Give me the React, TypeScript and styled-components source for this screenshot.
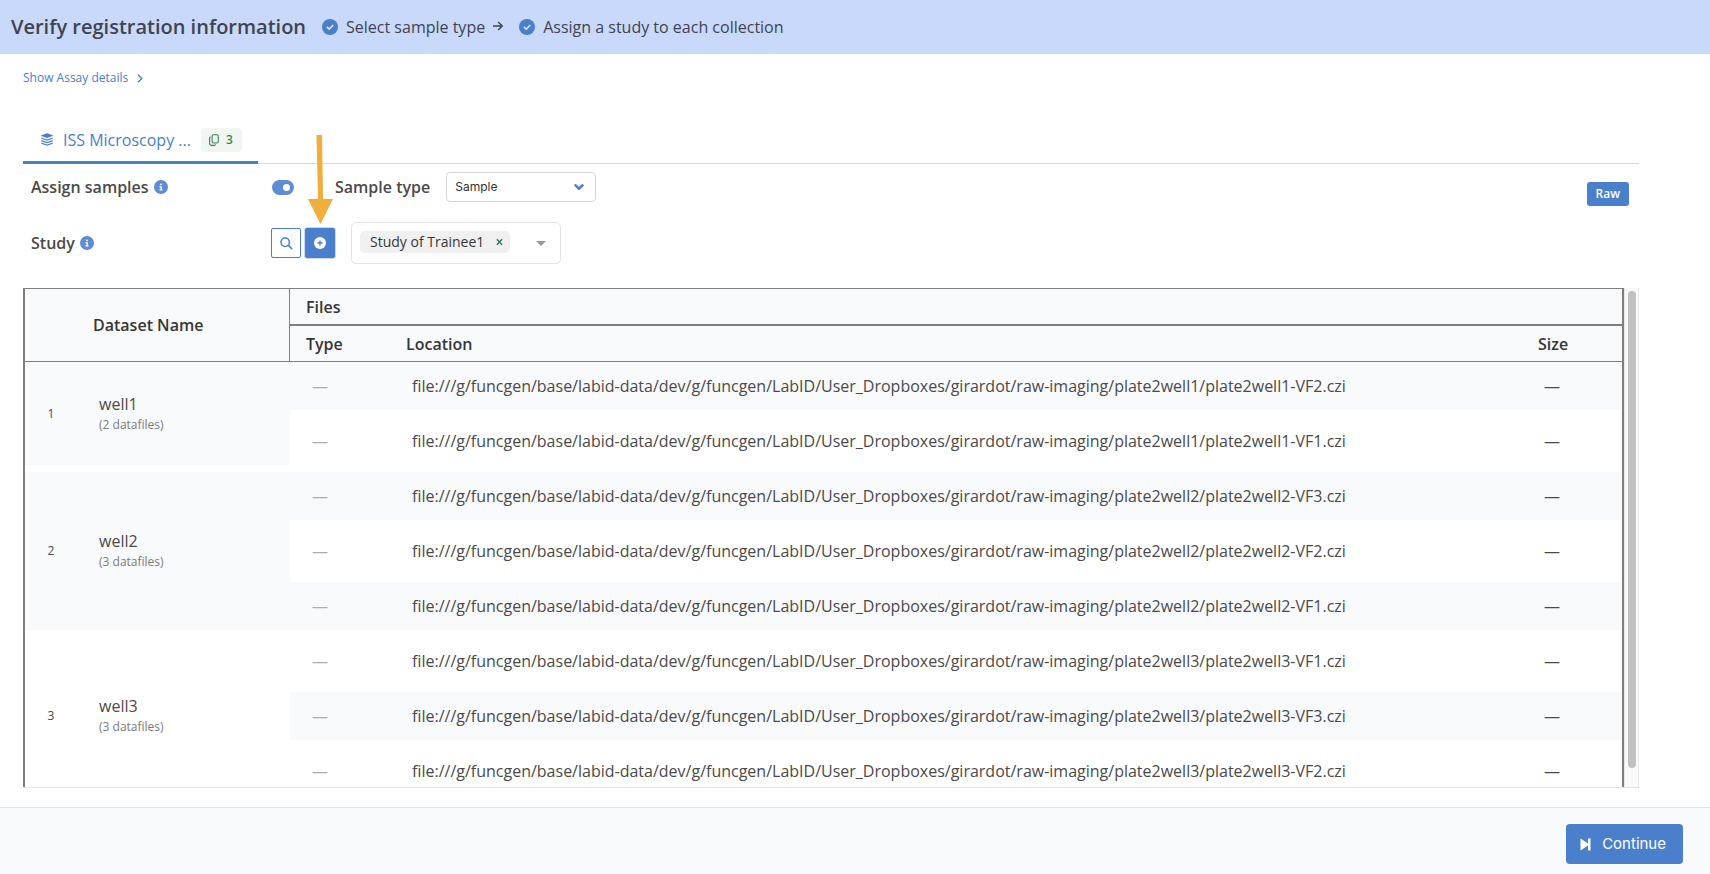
import React, { useState } from "react";
import styled, { createGlobalStyle } from "styled-components";
import { FaCircleInfo } from "react-icons/fa6";

const blue = "#4a7fcb";
const softBlue = "#5f8dd3";
const stripe = "#f9fafc";
const rule = "#7f7f7f";

const GlobalStyle = createGlobalStyle`
  *, *::before, *::after { box-sizing: border-box; }
  body {
    margin: 0;
    background: #fff;
    color: #4a4a4a;
    font-family: "Open Sans", "Liberation Sans", sans-serif;
    font-size: 16px;
    line-height: 24px;
  }
  button, select, input { font: inherit; }
`;

const Page = styled.div`
  display: flex;
  flex-direction: column;
  height: 100vh;
`;

const Header = styled.header`
  display: flex;
  align-items: center;
  height: 54px;
  padding: 0 11px;
  background: #c9d9fb;
  color: #3f4450;
`;

const Title = styled.h1`
  margin: 0 16px 0 0;
  font-size: 20px;
  line-height: 28px;
  font-weight: 600;
`;

const Step = styled.span`
  display: flex;
  align-items: center;
  gap: 8px;
`;

const StepArrow = styled.svg`
  margin-right: 16px;
`;

const Main = styled.main`
  display: flex;
  flex-direction: column;
  flex: 1;
  min-height: 0;
  padding: 12px 71px 19px 23px;
`;

const DetailsLink = styled.a`
  display: flex;
  align-items: center;
  align-self: flex-start;
  gap: 9px;
  color: ${blue};
  font-size: 12px;
  text-decoration: none;
`;

const Tabs = styled.div`
  display: flex;
  margin-top: 26px;
  border-bottom: 1px solid #d9d9d9;
`;

const Tab = styled.button`
  display: flex;
  align-items: center;
  height: 48px;
  margin-bottom: -1px;
  padding: 2px 16px 0 18px;
  border: 0;
  border-bottom: 3px solid ${blue};
  background: none;
  color: ${blue};
  gap: 10px;
`;

const CountBadge = styled.span`
  display: flex;
  align-items: center;
  gap: 7px;
  height: 24px;
  padding: 0 9px 0 8px;
  border-radius: 4px;
  background: #f0f7f3;
  color: #3d8353;
  font-size: 12px;
  font-weight: 600;
`;

const Settings = styled.div`
  display: grid;
  grid-template-columns: 240px auto 1fr;
  align-items: center;
  padding: 4px 10px 24px 8px;
  row-gap: 16px;
`;

const Label = styled.label`
  display: flex;
  align-items: center;
  gap: 5px;
  font-weight: 600;
  svg { color: ${softBlue}; }
`;

const Controls = styled.div`
  display: flex;
  align-items: center;
`;

const Switch = styled.input`
  appearance: none;
  display: flex;
  align-items: center;
  justify-content: flex-end;
  width: 22px;
  height: 15px;
  margin: 0 41px 0 1px;
  padding: 0 4px;
  border-radius: 8px;
  background: ${softBlue};
  &::before {
    content: "";
    width: 7px;
    height: 7px;
    border-radius: 50%;
    background: #fff;
  }
  &:not(:checked) { justify-content: flex-start; background: #b5b5b5; }
`;

const SelectBox = styled.div`
  position: relative;
  margin-left: 16px;
  svg { position: absolute; right: 12px; top: 11px; pointer-events: none; }
`;

const Select = styled.select`
  appearance: none;
  display: block;
  width: 150px;
  height: 30px;
  padding: 0 8px;
  border: 1px solid #d6d6d6;
  border-radius: 4px;
  background: #fff;
  color: #333;
  font-family: Inter, sans-serif;
  font-size: 12px;
`;

const RawButton = styled.button`
  justify-self: end;
  height: 24px;
  margin-top: 14px;
  padding: 0 9px;
  border: 0;
  border-radius: 3px;
  background: ${blue};
  color: #fff;
  font-size: 12px;
  font-weight: 600;
`;

const IconButton = styled.button<{ $filled?: boolean }>`
  position: relative;
  display: flex;
  align-items: center;
  justify-content: center;
  width: 30px;
  height: 30px;
  padding: 0;
  border: 1px solid ${blue};
  border-radius: 2px;
  background: ${(p) => (p.$filled ? blue : "#fff")};
  color: ${(p) => (p.$filled ? "#fff" : blue)};
  box-shadow: ${(p) => (p.$filled ? "0 0 0 1px #cbdaf1" : "none")};
`;

const Pointer = styled.svg`
  position: absolute;
  left: 1px;
  bottom: 33px;
  pointer-events: none;
`;

const MultiSelect = styled.div`
  display: flex;
  align-items: center;
  justify-content: space-between;
  width: 210px;
  height: 42px;
  padding: 0 14px 2px 8px;
  border: 1px solid #e4e4e4;
  border-radius: 5px;
`;

const Chip = styled.span`
  display: flex;
  align-items: center;
  gap: 12px;
  height: 22px;
  padding: 0 7px 0 10px;
  border-radius: 5px;
  background: #f0f0f0;
  color: #35383b;
  font-size: 14px;
`;

const BareButton = styled.button`
  display: flex;
  padding: 0;
  border: 0;
  background: none;
`;

const StudyControls = styled(Controls)`
  grid-column: 2 / -1;
  gap: 4px;
  ${MultiSelect} { margin-left: 12px; }
`;

const ScrollFrame = styled.div`
  display: flex;
  flex: 1;
  min-height: 0;
  border-bottom: 1px solid #e4e4e8;
`;

const TableView = styled.div`
  flex: 1;
  overflow: hidden;
`;

const ScrollTrack = styled.div`
  width: 15px;
  padding: 3px 2px 19px 3px;
  border: solid #e8e8e8;
  border-width: 0 1px;
  background: #fafafa;
`;

const ScrollThumb = styled.div`
  width: 8px;
  height: 100%;
  border-radius: 4px;
  background: #c1c1c1;
`;

const Table = styled.table`
  width: 100%;
  table-layout: fixed;
  border: solid ${rule};
  border-width: 1px 2px 0;
  border-spacing: 0;
`;

const Col = styled.col<{ $width?: number }>`
  width: ${(p) => (p.$width ? p.$width + "px" : "auto")};
`;

const Th = styled.th<{ $line?: number; $side?: boolean }>`
  height: ${(p) => 35 + (p.$line ?? 1)}px;
  padding: 0 16px;
  border-bottom: ${(p) => p.$line ?? 1}px solid ${rule};
  border-right: ${(p) => (p.$side ? 1 : 0)}px solid ${rule};
  background: ${stripe};
  color: #363636;
  font-weight: 600;
  text-align: left;
`;

const Td = styled.td<{ $shaded: boolean; $muted?: boolean }>`
  height: 55px;
  padding: 0 22px;
  border-bottom: 7px solid transparent;
  background: ${(p) => (p.$shaded ? stripe : "#fff")};
  background-clip: padding-box;
  color: ${(p) => (p.$muted ? "#adadad" : "#4a4a4a")};
  white-space: nowrap;
`;

const IndexTd = styled(Td)`
  padding: 0;
  font-size: 12px;
  text-align: center;
`;

const SubText = styled.div`
  padding-bottom: 2px;
  color: #7a7a7a;
  font-size: 12px;
  line-height: 18px;
`;

const Footer = styled.footer`
  display: flex;
  justify-content: flex-end;
  align-items: flex-start;
  height: 67px;
  padding: 16px 27px 0;
  border-top: 1px solid #e4e4ea;
  background: ${stripe};
`;

const ContinueButton = styled.button`
  display: flex;
  align-items: center;
  gap: 11px;
  height: 40px;
  padding: 0 17px 0 14px;
  border: 0;
  border-radius: 4px;
  background: ${blue};
  color: #fff;
  font-family: Inter, sans-serif;
  font-size: 15px;
`;

const root = "file:///g/funcgen/base/labid-data/dev/g/funcgen/LabID/User_Dropboxes/girardot/raw-imaging/";

const datasets = [
  { name: "well1", shaded: true, files: ["VF2", "VF1"] },
  { name: "well2", shaded: true, files: ["VF3", "VF2", "VF1"] },
  { name: "well3", shaded: false, files: ["VF1", "VF3", "VF2"] },
];

function CheckIcon() {
  return (
    <svg width="16" height="16" viewBox="0 0 16 16" fill="none">
      <circle cx="8" cy="8" r="8" fill={blue} />
      <path d="M4.9 7.9L7.2 10.1L11.3 5.9" stroke="#dfe9fc" strokeWidth="1.5" />
    </svg>
  );
}

function StackIcon() {
  return (
    <svg width="12" height="13" viewBox="0 0 12 13" fill="currentColor">
      <path d="M6 0.2L11.7 2.3V3.1L6 5.1L0.3 3.1V2.3Z" />
      <path d="M0.3 4.5L6 6.4L11.7 4.5V5.8L6 7.7L0.3 5.8Z" />
      <path d="M0.3 7.1L6 9L11.7 7.1V8.4L6 10.3L0.3 8.4Z" />
      <path d="M0.3 9.6L6 11.4L11.7 9.6V10.8L6 12.8L0.3 10.8Z" />
    </svg>
  );
}

function CopyIcon() {
  return (
    <svg width="10" height="12" viewBox="0 0 10 12" fill="none" stroke="currentColor" strokeWidth="1.1">
      <rect x="3.1" y="0.8" width="6.2" height="8.2" rx="1.6" />
      <path d="M1.8 3H1.6Q0.6 3 0.6 4V9.6Q0.6 11.4 2.4 11.4H5.4Q6.4 11.4 6.6 10.4" />
    </svg>
  );
}

function DatasetRows() {
  let line = 0;
  return (
    <>
      {datasets.map((set, s) =>
        set.files.map((file, f) => {
          const shaded = line++ % 2 === 0;
          return (
            <tr key={set.name + file}>
              {f === 0 && (
                <>
                  <IndexTd $shaded={set.shaded} rowSpan={set.files.length}>{s + 1}</IndexTd>
                  <Td $shaded={set.shaded} rowSpan={set.files.length}>
                    {set.name}
                    <SubText>({set.files.length} datafiles)</SubText>
                  </Td>
                </>
              )}
              <Td $shaded={shaded} $muted>—</Td>
              <Td $shaded={shaded}>{`${root}plate2${set.name}/plate2${set.name}-${file}.czi`}</Td>
              <Td $shaded={shaded}>—</Td>
            </tr>
          );
        })
      )}
    </>
  );
}

export default function App() {
  const [assign, setAssign] = useState(true);
  return (
    <Page>
      <GlobalStyle />
      <Header>
        <Title>Verify registration information</Title>
        <Step>
          <CheckIcon />
          Select sample type
          <StepArrow width="10" height="12" viewBox="0 0 10 12" fill="none" stroke="#3f4450" strokeWidth="1.4">
            <path d="M0 5H9M5.2 1L9.2 5L5.2 9" />
          </StepArrow>
        </Step>
        <Step>
          <CheckIcon />
          Assign a study to each collection
        </Step>
      </Header>

      <Main>
        <DetailsLink href="#assay">
          Show Assay details
          <svg width="6" height="9" viewBox="0 0 6 9" fill="none" stroke={blue} strokeWidth="1.4">
            <path d="M1 0.8L4.8 4.5L1 8.2" />
          </svg>
        </DetailsLink>

        <Tabs role="tablist">
          <Tab role="tab" aria-selected="true">
            <StackIcon />
            ISS Microscopy ...
            <CountBadge>
              <CopyIcon />3
            </CountBadge>
          </Tab>
        </Tabs>

        <Settings>
          <Label htmlFor="assign">
            Assign samples <FaCircleInfo size={14} />
          </Label>
          <Controls>
            <Switch id="assign" type="checkbox" checked={assign} onChange={(e) => setAssign(e.target.checked)} />
            <Label htmlFor="sample-type">Sample type</Label>
            <SelectBox>
              <Select id="sample-type">
                <option>Sample</option>
              </Select>
              <svg width="10" height="8" viewBox="0 0 10 8" fill="none" stroke={blue} strokeWidth="2.4">
                <path d="M0.8 1.5L5 5.7L9.2 1.5" />
              </svg>
            </SelectBox>
          </Controls>
          <RawButton>Raw</RawButton>

          <Label as="span">
            Study <FaCircleInfo size={14} />
          </Label>
          <StudyControls>
            <IconButton aria-label="Search studies">
              <svg width="13" height="13" viewBox="0 0 13 13" fill="none" stroke="currentColor" strokeWidth="1.5">
                <circle cx="5.2" cy="5.2" r="4.2" />
                <path d="M8.4 8.4L12.3 12.3" />
              </svg>
            </IconButton>
            <IconButton $filled aria-label="Add study">
              <svg width="12" height="12" viewBox="0 0 12 12">
                <circle cx="6" cy="6" r="6" fill="#fff" />
                <path d="M6 3.5V8.5M3.5 6H8.5" stroke={blue} strokeWidth="1.3" />
              </svg>
              <Pointer width="26" height="89" viewBox="0 0 26 89" fill="#f0ae3c">
                <path d="M9.5 0H15L16 64H26L13.5 89L1 64H11Z" />
              </Pointer>
            </IconButton>
            <MultiSelect>
              <Chip>
                Study of Trainee1
                <BareButton aria-label="Remove Study of Trainee1">
                  <svg width="7" height="8" viewBox="0 0 7 8" stroke="#2f7a55" strokeWidth="1.4">
                    <path d="M0.9 1.2L6.1 6.8M6.1 1.2L0.9 6.8" />
                  </svg>
                </BareButton>
              </Chip>
              <BareButton aria-label="Open studies">
                <svg width="10" height="7" viewBox="0 0 10 7" fill="#999">
                  <path d="M0 2H10L5 7Z" />
                </svg>
              </BareButton>
            </MultiSelect>
          </StudyControls>
        </Settings>

        <ScrollFrame>
          <TableView>
            <Table>
              <colgroup>
                <Col $width={52} />
                <Col $width={213} />
                <Col $width={100} />
                <Col />
                <Col $width={100} />
              </colgroup>
              <thead>
                <tr>
                  <Th rowSpan={2} aria-label="Number" />
                  <Th rowSpan={2} $side>Dataset Name</Th>
                  <Th colSpan={3} $line={2}>Files</Th>
                </tr>
                <tr>
                  <Th>Type</Th>
                  <Th>Location</Th>
                  <Th>Size</Th>
                </tr>
              </thead>
              <tbody>
                <DatasetRows />
              </tbody>
            </Table>
          </TableView>
          <ScrollTrack aria-hidden="true">
            <ScrollThumb />
          </ScrollTrack>
        </ScrollFrame>
      </Main>

      <Footer>
        <ContinueButton>
          <svg width="11" height="13" viewBox="0 0 11 13" fill="#fff">
            <path d="M0.5 0.5L8 5.6V0.5H10.5V12.5H8V7.4L0.5 12.5Z" />
          </svg>
          Continue
        </ContinueButton>
      </Footer>
    </Page>
  );
}
